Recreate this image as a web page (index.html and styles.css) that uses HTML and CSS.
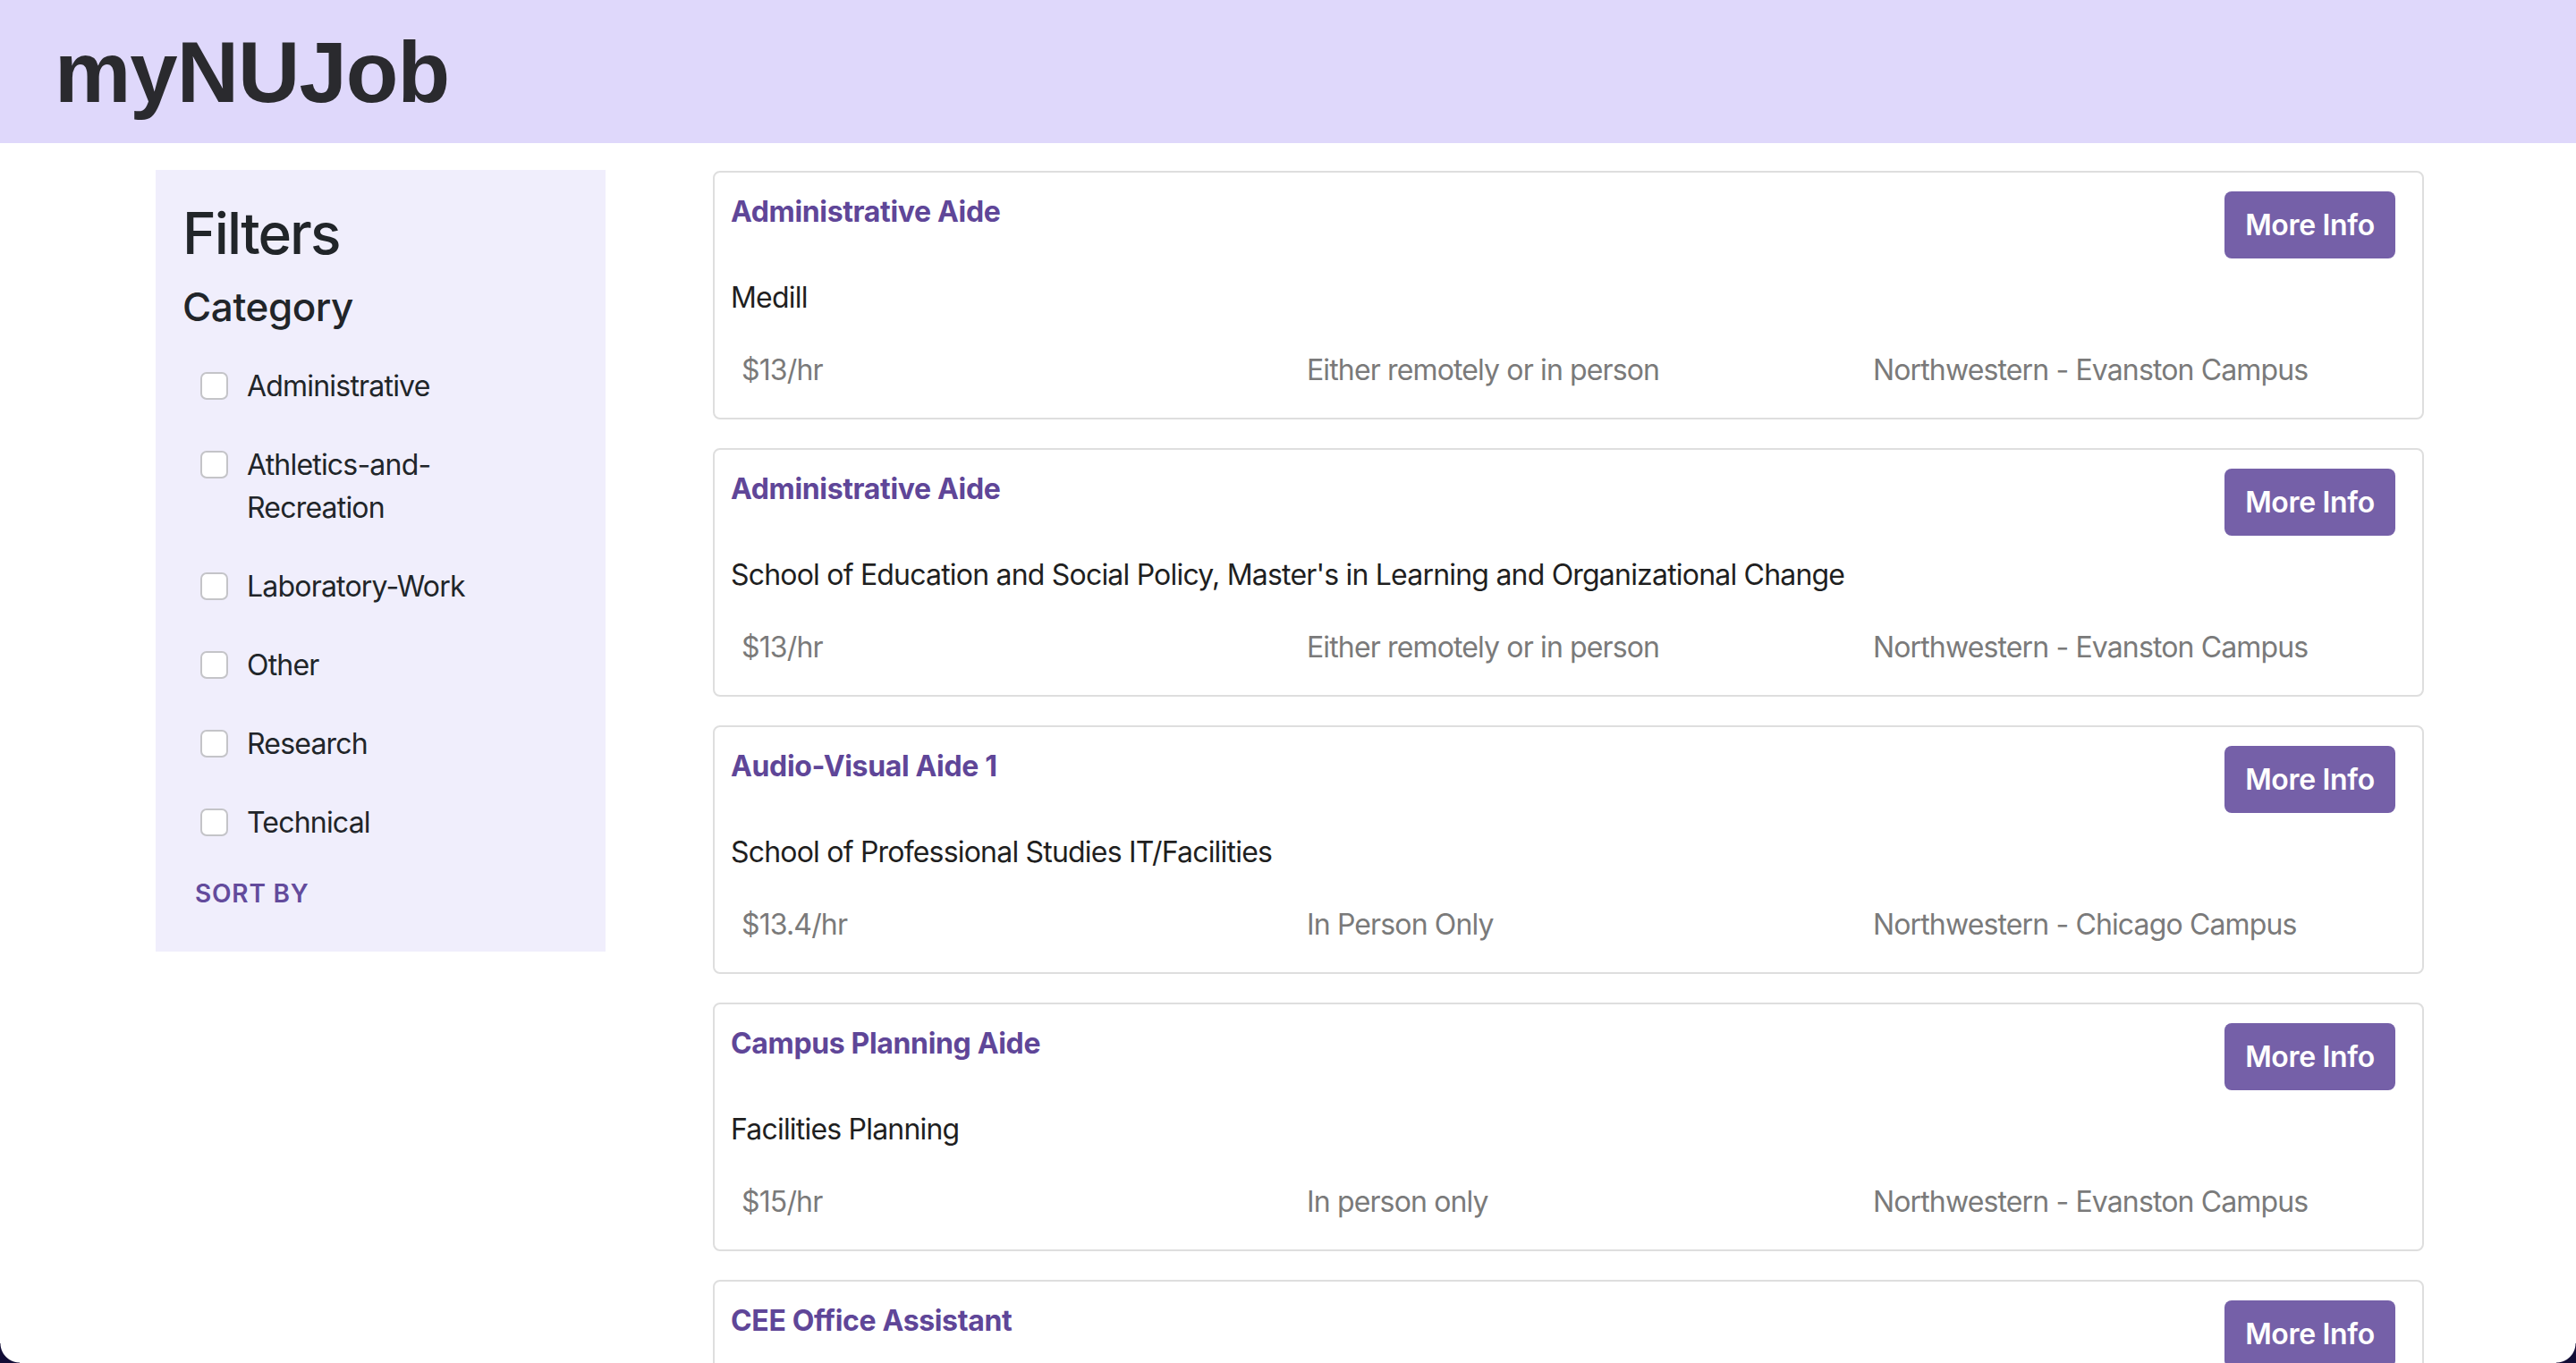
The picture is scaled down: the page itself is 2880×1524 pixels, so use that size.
FILE: index.html
```html
<!DOCTYPE html>
<html lang="en">
<head>
<meta charset="utf-8">
<title>myNUJob</title>
<link rel="stylesheet" href="styles.css">
</head>
<body>
<header class="topbar">
  <h1 class="brand">myNUJob</h1>
</header>
<main class="layout">
  <aside class="filters">
    <h2 class="filters-title">Filters</h2>
    <h3 class="filters-sub">Category</h3>
    <ul class="check-list">
      <li class="check-row"><span class="box"></span><span class="check-label">Administrative</span></li>
      <li class="check-row"><span class="box"></span><span class="check-label">Athletics-and-Recreation</span></li>
      <li class="check-row"><span class="box"></span><span class="check-label">Laboratory-Work</span></li>
      <li class="check-row"><span class="box"></span><span class="check-label">Other</span></li>
      <li class="check-row"><span class="box"></span><span class="check-label">Research</span></li>
      <li class="check-row"><span class="box"></span><span class="check-label">Technical</span></li>
    </ul>
    <button class="sort-btn">Sort By</button>
  </aside>
  <section class="jobs">
    <article class="job">
      <div class="job-head"><h4 class="job-title">Administrative Aide</h4><button class="more">More Info</button></div>
      <p class="job-dept">Medill</p>
      <div class="job-meta"><span>$13/hr</span><span>Either remotely or in person</span><span>Northwestern - Evanston Campus</span></div>
    </article>
    <article class="job">
      <div class="job-head"><h4 class="job-title">Administrative Aide</h4><button class="more">More Info</button></div>
      <p class="job-dept">School of Education and Social Policy, Master's in Learning and Organizational Change</p>
      <div class="job-meta"><span>$13/hr</span><span>Either remotely or in person</span><span>Northwestern - Evanston Campus</span></div>
    </article>
    <article class="job">
      <div class="job-head"><h4 class="job-title">Audio-Visual Aide 1</h4><button class="more">More Info</button></div>
      <p class="job-dept">School of Professional Studies IT/Facilities</p>
      <div class="job-meta"><span>$13.4/hr</span><span>In Person Only</span><span>Northwestern - Chicago Campus</span></div>
    </article>
    <article class="job">
      <div class="job-head"><h4 class="job-title">Campus Planning Aide</h4><button class="more">More Info</button></div>
      <p class="job-dept">Facilities Planning</p>
      <div class="job-meta"><span>$15/hr</span><span>In person only</span><span>Northwestern - Evanston Campus</span></div>
    </article>
    <article class="job">
      <div class="job-head"><h4 class="job-title">CEE Office Assistant</h4><button class="more">More Info</button></div>
    </article>
  </section>
</main>
<div class="corner corner-left"></div>
<div class="corner corner-right"></div>
</body>
</html>
```

FILE: styles.css
```css
* { box-sizing: border-box; }
html, body { margin: 0; padding: 0; }
body {
  font-family: Inter, "Noto Sans", sans-serif;
  color: #212529;
  background: #ffffff;
  height: 1524px;
  overflow: hidden;
  letter-spacing: -0.022em;
}
.topbar {
  background: #dfd8fb;
  height: 160px;
  padding: 23px 61px 0;
}
.brand {
  margin: 0;
  font-family: "Liberation Sans", Arial, sans-serif;
  font-weight: 700;
  font-size: 96px;
  line-height: 115px;
  color: #2a2a2e;
  letter-spacing: -1px;
}
.layout {
  display: flex;
  align-items: flex-start;
  gap: 120px;
  padding: 30px 0 0 174px;
}
.filters {
  flex: 0 0 503px;
  background: #f0eefc;
  padding: 33px 32px 40px 30px;
}
.filters-title {
  margin: 0 0 17px;
  font-size: 64px;
  font-weight: 500;
  line-height: 1.2;
  letter-spacing: -0.03em;
}
.filters-sub {
  margin: 0;
  font-size: 44px;
  font-weight: 500;
  line-height: 1.2;
  letter-spacing: -0.01em;
}
.check-list {
  list-style: none;
  margin: 38px 0 0;
  padding: 0 0 0 20px;
  display: flex;
  flex-direction: column;
  gap: 40px;
}
.check-row {
  display: flex;
  align-items: flex-start;
  gap: 21px;
  font-size: 32px;
  line-height: 48px;
  letter-spacing: -0.025em;
}
.box {
  flex: 0 0 31px;
  width: 31px;
  height: 31px;
  margin-top: 8px;
  border: 2px solid #c4c4c8;
  border-radius: 7px;
  background: #ffffff;
}
.check-label { max-width: 300px; }
.sort-btn {
  margin: 31px 0 0 14px;
  padding: 0;
  border: 0;
  background: none;
  font-family: inherit;
  font-size: 28px;
  font-weight: 600;
  line-height: 49px;
  text-transform: uppercase;
  letter-spacing: 0.8px;
  color: #634b9c;
}
.jobs {
  flex: 0 0 1913px;
  display: flex;
  flex-direction: column;
  gap: 32px;
  padding-top: 1px;
}
.job {
  border: 2px solid #dedede;
  border-radius: 8px;
  height: 278px;
  padding: 21px 30px 0 18px;
  background: #ffffff;
}
.job-head {
  display: flex;
  justify-content: space-between;
  align-items: flex-start;
}
.job-title {
  margin: 4px 0 0;
  font-size: 32px;
  font-weight: 700;
  line-height: 1.2;
  color: #5f4698;
}
.more {
  width: 191px;
  height: 75px;
  border: 0;
  border-radius: 8px;
  background: #7560a8;
  color: #ffffff;
  font-family: inherit;
  font-size: 32px;
  font-weight: 600;
  line-height: 48px;
  letter-spacing: -0.01em;
  padding: 0;
}
.job-dept {
  margin: 20px 0 0;
  font-size: 32px;
  line-height: 48px;
  color: #1f1f1f;
  letter-spacing: -0.025em;
}
.job-meta {
  margin: 33px 0 0 12px;
  display: grid;
  grid-template-columns: 632px 633px 1fr;
  font-size: 32px;
  line-height: 48px;
  color: #7a7a7a;
  letter-spacing: -0.027em;
}
.corner {
  position: fixed;
  bottom: 0;
  width: 22px;
  height: 22px;
}
.corner-left {
  left: 0;
  background: radial-gradient(circle at 100% 0, transparent 21px, #120d36 22px);
}
.corner-right {
  right: 0;
  background: radial-gradient(circle at 0 0, transparent 21px, #120d36 22px);
}
```
